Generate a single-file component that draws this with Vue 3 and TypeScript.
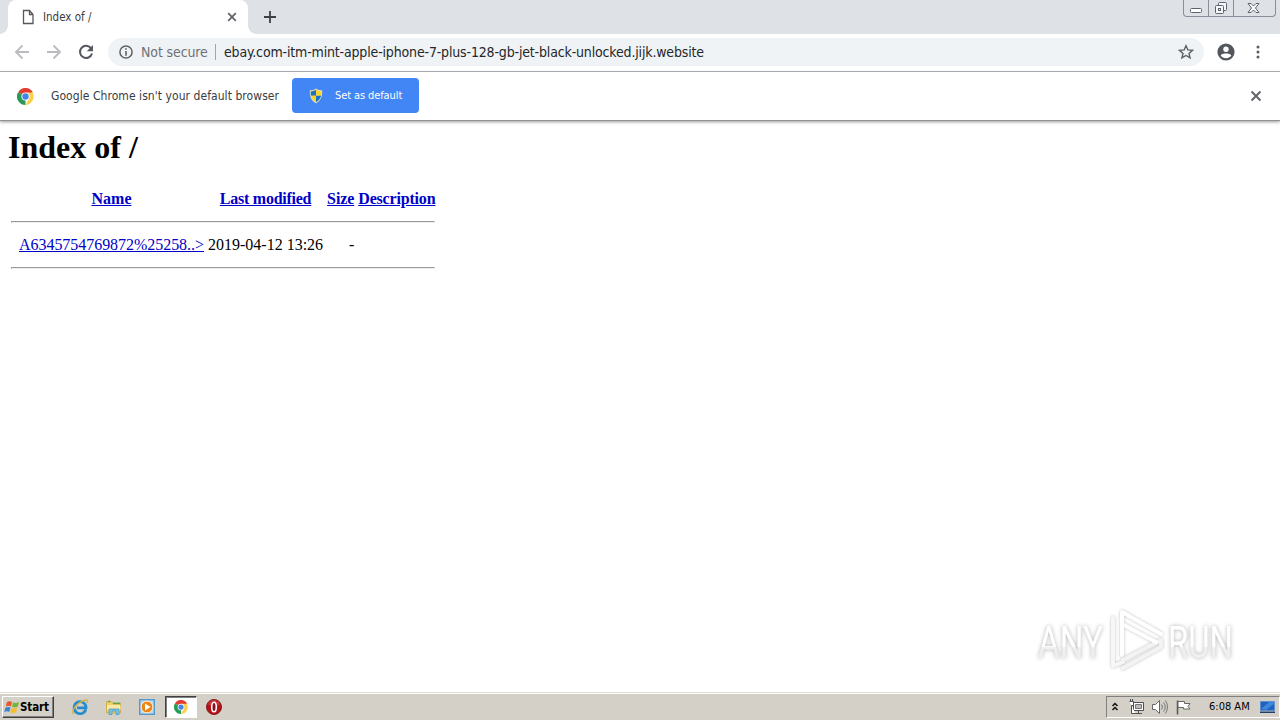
<script setup lang="ts">
interface Column {
  label: string
  key: 'name' | 'modified' | 'size' | 'description'
}

interface Entry {
  name: string
  modified: string
  size: string
  description: string
}

const columns: Column[] = [
  { label: 'Name', key: 'name' },
  { label: 'Last modified', key: 'modified' },
  { label: 'Size', key: 'size' },
  { label: 'Description', key: 'description' },
]

const entries: Entry[] = [
  { name: 'A6345754769872%25258..>', modified: '2019-04-12 13:26', size: '-', description: '' },
]

const host = 'ebay.com-itm-mint-apple-iphone-7-plus-128-gb-jet-black-unlocked.jijk.website'
</script>

<template>
  <div class="screen">
    <header class="tabstrip">
      <div class="tab">
        <svg class="page-icon" width="12" height="16" viewBox="0 0 12 16">
          <path d="M1.5 1.500h6l3.500 4v9H1.500z M7.500 1.500v4h3.500" fill="#fff" stroke="#55585c" stroke-width="1.300" />
        </svg>
        <span class="tab-title">Index of /</span>
        <svg class="tab-close" width="10" height="10" viewBox="0 0 10 10">
          <path d="M1.200 1.200l7.600 7.600M8.800 1.200l-7.600 7.600" stroke="#5f6368" stroke-width="1.700" />
        </svg>
      </div>
      <svg class="plus" width="12" height="12" viewBox="0 0 12 12">
        <path d="M6 0v12M0 6h12" stroke="#3c4043" stroke-width="1.800" />
      </svg>
      <div class="window-buttons">
        <span class="wb minimize">
          <svg width="13" height="6" viewBox="0 0 13 6"><rect x=".5" y=".5" width="11" height="4" rx="1" fill="#fff" stroke="#5c6270" /></svg>
        </span>
        <span class="wb restore">
          <svg width="14" height="14" viewBox="0 0 14 14" stroke="#5c6270" fill="#f5f6f8">
            <rect x="4.500" y="1.500" width="8" height="8" rx="1" />
            <rect x="1.500" y="4.500" width="8" height="8" rx="1" />
            <rect x="4.500" y="7.500" width="2" height="2" />
          </svg>
        </span>
        <span class="wb close">
          <svg width="13" height="12" viewBox="0 0 13 12">
            <path d="M1 1.500h3l2.500 2.500 2.500-2.500h3l-3.500 4.500 3.500 4.500h-3l-2.500-2.500-2.500 2.500h-3l3.500-4.500z" fill="#fafafa" stroke="#5c6270" />
          </svg>
        </span>
      </div>
    </header>

    <nav class="toolbar">
      <svg class="back" width="16" height="16" viewBox="0 0 16 16" fill="none" stroke="#b9bbbe" stroke-width="1.800">
        <path d="M15 8H2M8.500 1.500L2 8l6.500 6.500" />
      </svg>
      <svg class="forward" width="16" height="16" viewBox="0 0 16 16" fill="none" stroke="#b9bbbe" stroke-width="1.800">
        <path d="M1 8h13M7.500 1.500L14 8l-6.500 6.500" />
      </svg>
      <svg class="reload" width="16" height="16" viewBox="0 0 16 16">
        <path d="M13.200 4.500A6.100 6.100 0 1 0 14 9.500" fill="none" stroke="#55595e" stroke-width="2" />
        <path d="M15 1v6.200H8.800z" fill="#55595e" />
      </svg>
      <div class="omnibox">
        <svg class="info" width="14" height="14" viewBox="0 0 14 14">
          <circle cx="7" cy="7" r="6.100" fill="none" stroke="#5f6368" stroke-width="1.500" />
          <path d="M7 3.200v1.600M7 6v4.800" stroke="#5f6368" stroke-width="1.600" />
        </svg>
        <span class="security">Not secure</span>
        <span class="separator"></span>
        <span class="url">{{ host }}</span>
        <svg class="star" width="16" height="16" viewBox="0 0 16 16">
          <path d="M8 1.700l1.850 4.250 4.650.4-3.500 3.050 1.050 4.500L8 11.500l-4.050 2.400L5 9.400 1.500 6.350l4.650-.4z" fill="none" stroke="#5a5e63" stroke-width="1.400" />
        </svg>
      </div>
      <svg class="avatar" width="18" height="18" viewBox="0 0 18 18">
        <circle cx="9" cy="9" r="8.600" fill="#53575c" />
        <circle cx="9" cy="6.200" r="2.700" fill="#fff" />
        <path d="M3.700 12.500c1.400-2.600 9.200-2.600 10.600 0-2.300 3.600-8.300 3.600-10.600 0z" fill="#fff" />
      </svg>
      <svg class="menu" width="4" height="14" viewBox="0 0 4 14" fill="#5a5e63">
        <circle cx="2" cy="2" r="1.500" /><circle cx="2" cy="7" r="1.500" /><circle cx="2" cy="12" r="1.500" />
      </svg>
    </nav>

    <section class="infobar">
      <svg class="chrome-logo" width="17" height="17" viewBox="0 0 48 48">
        <path d="M24 24L3.200 12A24 24 0 0 1 44.800 12z" fill="#e33b2e" />
        <path d="M24 24V48A24 24 0 0 1 3.200 12z" fill="#279b56" />
        <path d="M24 13h20.200A24 24 0 0 1 24 48l9.500-18z" fill="#fbd04b" />
        <circle cx="24" cy="24" r="11.500" fill="#fff" />
        <circle cx="24" cy="24" r="9" fill="#4285e8" />
      </svg>
      <span class="message">Google Chrome isn't your default browser</span>
      <button class="default-button" type="button">
        <svg width="14" height="16" viewBox="0 0 14 16">
          <path d="M7 .5C5 2 3 2.300.800 2.300c-.3 6 1.200 10.200 6.200 13 5-2.800 6.500-7 6.200-13C11 2.300 9 2 7 .5z" fill="#e7dfb2" />
          <path d="M7 1.800v6H1.900c-.2-1.500-.2-3-.1-4.400C3.600 3.400 5.200 3 7 1.800z" fill="#1973c8" />
          <path d="M7 1.800v6h5.100c.2-1.500.2-3 .1-4.400C10.400 3.400 8.800 3 7 1.800z" fill="#fbd32c" />
          <path d="M7 7.800v6.400c-3-1.800-4.500-3.900-5.100-6.400z" fill="#fbd32c" />
          <path d="M7 7.800v6.400c3-1.800 4.500-3.900 5.100-6.400z" fill="#1973c8" />
        </svg>
        <span>Set as default</span>
      </button>
      <svg class="info-close" width="12" height="12" viewBox="0 0 12 12">
        <path d="M1.500 1.500l9 9M10.500 1.500l-9 9" stroke="#5f6368" stroke-width="1.900" />
      </svg>
    </section>

    <main class="page">
      <h1>Index of /</h1>
      <table>
        <tbody>
          <tr>
            <th>&nbsp;</th>
            <th v-for="column in columns" :key="column.key" :class="column.key"><a>{{ column.label }}</a></th>
          </tr>
          <tr><td colspan="5"><hr></td></tr>
          <tr v-for="entry in entries" :key="entry.name">
            <td></td>
            <td class="entry-name"><a>{{ entry.name }}</a></td>
            <td class="right">{{ entry.modified }}</td>
            <td class="right">{{ entry.size }}</td>
            <td>{{ entry.description }}</td>
          </tr>
          <tr><td colspan="5"><hr></td></tr>
        </tbody>
      </table>
      <svg class="watermark" width="226" height="76" viewBox="0 0 226 76">
        <defs>
          <linearGradient id="markFill" x1="0" y1="0" x2="0" y2="1">
            <stop offset=".57" stop-color="#fff" />
            <stop offset=".6" stop-color="#efefef" />
          </linearGradient>
        </defs>
        <g class="mark-text" fill="url(#markFill)">
          <text x="8" y="54" textLength="65" lengthAdjust="spacingAndGlyphs">ANY</text>
          <text x="138" y="54" textLength="65" lengthAdjust="spacingAndGlyphs">RUN</text>
        </g>
        <g class="mark-shape" fill="none" stroke="#fff" stroke-width="4" stroke-linejoin="round" stroke-linecap="round">
          <path d="M83 14v48l10-4" stroke="#f6f6f6" />
          <path d="M93 64l38-21v-7L93 56" stroke="#f3f3f3" />
          <path d="M92 51V8l39 22M92 51V20l34 18" />
        </g>
      </svg>
    </main>

    <footer class="taskbar">
      <div class="start">
        <svg width="16" height="16" viewBox="0 0 16 16">
          <path d="M3 3c2-1 3.500-1 5 0L6.800 7.500c-1.600-.9-3.100-.8-5 0z" fill="#e9542b" />
          <path d="M9 3.300c2 1 3.600.9 6-.2L13.700 7.800c-2 .9-3.700.9-5.700 0z" fill="#72b63a" />
          <path d="M1.500 8.600c1.800-.9 3.300-.9 5 0L5.200 13c-1.600-.9-3.200-.8-5 0z" fill="#3c83cf" />
          <path d="M7.600 8.900c2 1 3.600.9 5.700-.1L12 13.300c-2 .9-3.700.9-5.700 0z" fill="#f6bd26" />
        </svg>
        <span>Start</span>
      </div>
      <div class="launch">
        <svg width="18" height="18" viewBox="0 0 18 18">
          <path d="M14.800 11.500A6 6 0 1 1 15 8.800v1H6" fill="none" stroke="#268cd1" stroke-width="2.700" />
          <path d="M2.500 16C-1 13 7 3.500 15 2c2-.3 2 1 1.200 3" fill="none" stroke="#d9b53b" stroke-width="1.300" />
        </svg>
      </div>
      <div class="launch">
        <svg width="18" height="18" viewBox="0 0 18 18">
          <path d="M1.500 3.500h5l1 1.500h8v10h-14z" fill="#f0cf68" stroke="#d2ad49" />
          <path d="M3 3.500h2M8 5.500h7" stroke="#5ba854" stroke-width="1.500" />
          <path d="M2 7h13.500v5H2z" fill="#f9e9a2" />
          <path d="M4 16.500V11h10v5.500h-3V13H7v3.500z" fill="#77c4e8" stroke="#3f95c5" stroke-width=".7" />
        </svg>
      </div>
      <div class="launch">
        <svg width="16" height="16" viewBox="0 0 16 16">
          <rect x=".7" y=".7" width="14.600" height="14.600" fill="#b9d9ef" stroke="#5499cc" stroke-width="1.400" />
          <circle cx="8" cy="8" r="5.900" fill="#ef8417" stroke="#fff2d6" />
          <path d="M6 4.500v7L11.500 8z" fill="#fff" />
        </svg>
      </div>
      <div class="launch active">
        <svg width="14" height="14" viewBox="0 0 48 48">
          <path d="M24 24L3.200 12A24 24 0 0 1 44.800 12z" fill="#e33b2e" />
          <path d="M24 24V48A24 24 0 0 1 3.200 12z" fill="#279b56" />
          <path d="M24 13h20.200A24 24 0 0 1 24 48l9.500-18z" fill="#fbd04b" />
          <circle cx="24" cy="24" r="11.500" fill="#fff" />
          <circle cx="24" cy="24" r="9" fill="#4285e8" />
        </svg>
      </div>
      <div class="launch">
        <svg width="16" height="16" viewBox="0 0 16 16">
          <circle cx="8" cy="8" r="7.500" fill="#b51218" stroke="#83191a" />
          <path d="M2 5.500C4-.5 12-.5 14 5.500c-4 2-8 2-12 0z" fill="#d95355" opacity=".55" />
          <ellipse cx="8" cy="8" rx="2.300" ry="4.800" fill="#8c1015" stroke="#fff" stroke-width="1.600" />
        </svg>
      </div>
      <div class="tray">
        <svg class="chevrons" width="8" height="10" viewBox="0 0 8 10">
          <path d="M1.500 4l2.500-2.500L6.500 4M1.500 8l2.500-2.500L6.500 8" fill="none" stroke="#111" stroke-width="1.500" />
        </svg>
        <svg class="network" width="18" height="16" viewBox="0 0 18 16">
          <path d="M5.500 3.500h10v8h-10zM7 14.500h7M10.500 12v2" fill="#fff" stroke="#4f4f4f" />
          <path d="M7.500 5.500h6v4h-6z" fill="#bbb" stroke="#777" />
          <path d="M1.500 2.500h4v4h-2v8h4M2.500 0v2M4.500 0v2" fill="#fff" stroke="#4f4f4f" />
        </svg>
        <svg class="sound" width="17" height="16" viewBox="0 0 17 16">
          <path d="M1.500 5.500h3l4-4v13l-4-4h-3z" fill="#fff" stroke="#666" />
          <path d="M10.500 5.500q2 2.500 0 5M12.500 3.500q3.500 4.500 0 9M14.500 1.500q4 6.500 0 13" fill="none" stroke="#777" />
        </svg>
        <svg class="flag" width="17" height="16" viewBox="0 0 17 16">
          <path d="M2.500 1.500v14" stroke="#555" stroke-width="1.500" />
          <path d="M3 2.500h6.500v2h5.500l-2 3 2 2.500H8.500V8.500H3z" fill="#fff" stroke="#666" />
        </svg>
        <time>6:08 AM</time>
        <svg class="desktop" width="17" height="14" viewBox="0 0 17 14">
          <path d="M1.500 1.500h14v9h-14z" fill="#1f62bd" stroke="#5c8fce" />
          <path d="M1 11.500h15v1.500H1z" fill="#233d6c" />
          <path d="M2 9l8-7h5v2L7 10z" fill="#3e86dc" />
        </svg>
      </div>
    </footer>
  </div>
</template>

<style>
html,
body {
  margin: 0;
  overflow: hidden;
}
</style>

<style scoped>
.screen {
  width: 1280px;
  height: 720px;
  display: grid;
  grid-template-rows: 34px 38px 49px 571px 28px;
  background: #fff;
  font-family: "DejaVu Sans Condensed", "DejaVu Sans", sans-serif;
  font-stretch: condensed;
  color: #3a3c40;
  overflow: hidden;
}

svg {
  display: block;
  flex: none;
}

span,
time {
  white-space: nowrap;
}

.tabstrip {
  display: flex;
  align-items: center;
  background: #dee1e6;
  padding-left: 8px;
}

.tab {
  position: relative;
  box-sizing: border-box;
  width: 240px;
  height: 34px;
  display: flex;
  align-items: center;
  padding: 0 11px 0 14px;
  background: #fff;
  border-radius: 8px 8px 0 0;
}

.tab::before,
.tab::after {
  content: "";
  position: absolute;
  bottom: 0;
  width: 8px;
  height: 8px;
}

.tab::before {
  left: -8px;
  background: radial-gradient(circle at 0 0, #dee1e6 7.5px, #fff 8px);
}

.tab::after {
  right: -8px;
  background: radial-gradient(circle at 100% 0, #dee1e6 7.5px, #fff 8px);
}

.tab-title {
  margin-left: 9px;
  font-size: 11.5px;
}

.tab-close {
  margin-left: auto;
}

.plus {
  margin-left: 16px;
}

.window-buttons {
  align-self: flex-start;
  box-sizing: border-box;
  display: flex;
  width: 93px;
  height: 17px;
  margin: 0 4px 0 auto;
  border: 1px solid #898f9a;
  border-top: 0;
  border-radius: 0 0 4px 4px;
}

.wb {
  box-sizing: border-box;
  width: 25px;
  display: flex;
  justify-content: center;
}

.wb + .wb {
  border-left: 1px solid #898f9a;
}

.wb.minimize {
  width: 24px;
  padding-top: 8px;
}

.wb.restore {
  padding-top: 1px;
}

.wb.close {
  flex: 1;
  padding: 2px 2px 0 0;
}

.toolbar {
  display: flex;
  align-items: center;
  box-sizing: border-box;
  padding: 0 20px 1px 14px;
  border-bottom: 1px solid #b5b6b9;
}

.forward,
.reload {
  margin-left: 16px;
}

.omnibox {
  box-sizing: border-box;
  display: flex;
  align-items: center;
  width: 1096px;
  height: 28px;
  margin-left: 14px;
  padding: 0 10px 0 11px;
  border-radius: 14px;
  background: #f0f3f5;
  font-size: 14px;
}

.security {
  width: 67px;
  margin-left: 8px;
  color: #6d7176;
  letter-spacing: -0.12px;
}

.separator {
  width: 1px;
  height: 16px;
  margin-left: 7px;
  background: #a2a5a9;
}

.url {
  margin-left: 8px;
  color: #24262a;
  letter-spacing: -0.16px;
}

.star {
  margin-left: auto;
}

.avatar {
  margin-left: 13px;
}

.menu {
  margin-left: auto;
}

.infobar {
  position: relative;
  z-index: 1;
  box-sizing: border-box;
  display: flex;
  align-items: center;
  padding: 0 18px 0 17px;
  background: #fff;
  border-bottom: 1px solid #929292;
  box-shadow: 0 1px 3px rgba(0, 0, 0, 0.4);
}

.message {
  width: 229px;
  margin-left: 17px;
  font-size: 12px;
  letter-spacing: 0.06px;
}

.default-button {
  box-sizing: border-box;
  display: flex;
  align-items: center;
  width: 127px;
  height: 35px;
  margin: 0 0 1px 12px;
  padding: 0 0 0 17px;
  border: 0;
  border-radius: 4px;
  background: #4285f4;
  color: #fff;
  font: inherit;
  font-size: 11px;
}

.default-button span {
  margin-left: 12px;
  letter-spacing: -0.1px;
}

.info-close {
  margin-left: auto;
}

.page {
  position: relative;
  padding: 8px 8px 0;
  color: #000;
  font-family: "Liberation Serif", serif;
  font-stretch: normal;
  font-size: 16px;
}

h1 {
  margin: 0 0 20px;
  font-size: 32px;
  line-height: 37px;
}

table {
  border-spacing: 2px;
}

th,
td {
  height: 19px;
  padding: 1px;
  line-height: 18px;
}

a {
  color: #0000c8;
  text-decoration: underline;
}

th.modified {
  letter-spacing: -0.25px;
}

th.size {
  letter-spacing: -0.1px;
}

th.description {
  letter-spacing: -0.18px;
}

.entry-name {
  letter-spacing: -0.04px;
}

.right {
  text-align: right;
}

hr {
  margin: 8px 0;
}

.watermark {
  position: absolute;
  right: 24px;
  bottom: 12px;
}

.mark-text {
  font-family: "Roboto", sans-serif;
  font-size: 45px;
  filter: drop-shadow(0 0 2px rgba(0, 0, 0, 0.3));
}

.mark-shape {
  filter: drop-shadow(0 0 1.5px rgba(0, 0, 0, 0.26));
}

.taskbar {
  box-sizing: border-box;
  display: flex;
  align-items: center;
  padding: 0 0 0 2px;
  background: #d4d0c8;
  border-top: 1px solid #dedbd5;
  box-shadow: inset 0 1px #fff;
}

.start {
  box-sizing: border-box;
  display: flex;
  align-items: center;
  width: 52px;
  height: 22px;
  margin-right: 10px;
  padding-left: 1px;
  border: 1px solid;
  border-color: #fff #404040 #404040 #fff;
  box-shadow: inset -1px -1px #808080;
  color: #000;
  font-size: 11.5px;
  font-weight: bold;
}

.start span {
  letter-spacing: -0.1px;
}

.launch {
  box-sizing: border-box;
  width: 32px;
  height: 22px;
  margin-right: 1.5px;
  display: flex;
  align-items: center;
  justify-content: center;
}

.launch.active {
  border: 1px solid;
  border-color: #404040 #fff #fff #404040;
  box-shadow: inset 1px 1px #808080;
  background: #fff;
}

.tray {
  box-sizing: border-box;
  display: flex;
  align-items: center;
  width: 174px;
  height: 22px;
  margin-left: auto;
  padding: 0 3px 0 4px;
  border: 1px solid;
  border-color: #808080 #fff #fff #808080;
  color: #000;
  font-size: 11px;
}

.network {
  margin-left: 9px;
}

.sound {
  margin-left: 5px;
}

.flag {
  margin-left: 7px;
}

time {
  width: 42px;
  margin-left: 17px;
}

.desktop {
  margin-left: auto;
}
</style>
